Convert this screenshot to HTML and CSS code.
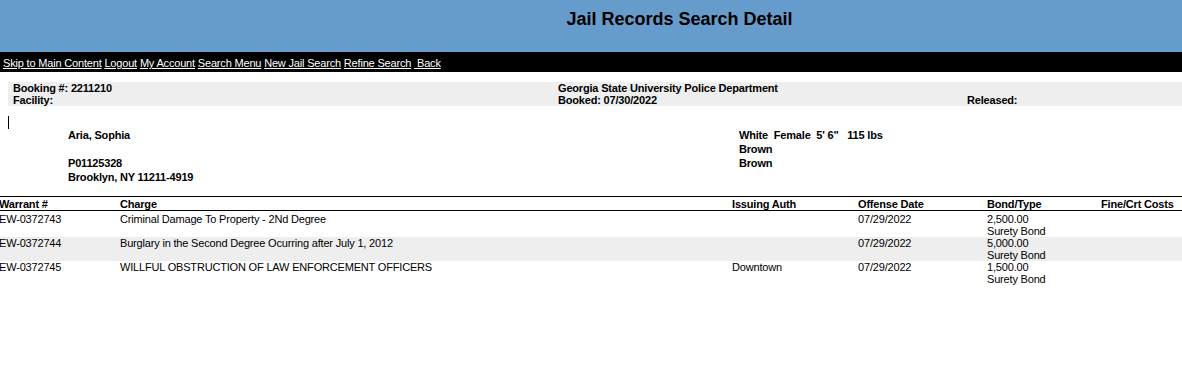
FILE: index.html
```html
<!DOCTYPE html>
<html lang="en">
<head>
    <meta charset="UTF-8">
    <title>Jail Records Search Detail</title>
    <link rel="stylesheet" href="styles.css">
</head>
<body>
    <div class="banner">
        <div class="banner-logo"></div>
        <h1>Jail Records Search Detail</h1>
    </div>
    <div class="nav">
        <a href="#main">Skip to Main Content</a>
        <a href="#">Logout</a>
        <a href="#">My Account</a>
        <a href="#">Search Menu</a>
        <a href="#">New Jail Search</a>
        <a href="#">Refine Search</a>
        <a href="#">&nbsp;Back</a>
    </div>

    <div class="booking" id="main">
        <div>Booking #: 2211210<br>Facility:</div>
        <div>Georgia State University Police Department<br>Booked: 07/30/2022</div>
        <div><br>Released:</div>
    </div>

    <div class="person">
        <div class="photo"></div>
        <div class="person-name">
            <div>Aria, Sophia</div>
            <div>&nbsp;</div>
            <div>P01125328</div>
            <div>Brooklyn, NY 11211-4919</div>
        </div>
        <div class="person-desc">
            <div class="pre">White  Female  5' 6"   115 lbs</div>
            <div>Brown</div>
            <div>Brown</div>
        </div>
    </div>

    <div class="charges">
        <div class="charge-row charge-head">
            <div>Warrant #</div>
            <div>Charge</div>
            <div>Issuing Auth</div>
            <div>Offense Date</div>
            <div>Bond/Type</div>
            <div>Fine/Crt Costs</div>
        </div>
        <div class="charge-row">
            <div>EW-0372743</div>
            <div>Criminal Damage To Property - 2Nd Degree</div>
            <div></div>
            <div>07/29/2022</div>
            <div>2,500.00<br>Surety Bond</div>
            <div></div>
        </div>
        <div class="charge-row alt">
            <div>EW-0372744</div>
            <div>Burglary in the Second Degree Ocurring after July 1, 2012</div>
            <div></div>
            <div>07/29/2022</div>
            <div>5,000.00<br>Surety Bond</div>
            <div></div>
        </div>
        <div class="charge-row">
            <div>EW-0372745</div>
            <div>WILLFUL OBSTRUCTION OF LAW ENFORCEMENT OFFICERS</div>
            <div>Downtown</div>
            <div>07/29/2022</div>
            <div>1,500.00<br>Surety Bond</div>
            <div></div>
        </div>
    </div>
</body>
</html>
```

FILE: styles.css
```css
body {
    margin: 0;
    font-family: "Liberation Sans", Arial, sans-serif;
    font-size: 11px;
    letter-spacing: -0.18px;
    color: #000;
    background: #fff;
    overflow: hidden;
}

/* top banner */
.banner {
    background-color: #669ccb;
    height: 52px;
    display: grid;
    grid-template-columns: 177px 1fr;
}
.banner h1 {
    margin: 0;
    padding-top: 9px;
    font-size: 18px;
    line-height: 20px;
    font-weight: bold;
    letter-spacing: 0;
    text-align: center;
}

/* nav links */
.nav {
    background-color: #000;
    height: 20px;
    line-height: 20px;
    padding-left: 3px;
    padding-top: 1px;
    box-sizing: border-box;
}
.nav a {
    color: #fff;
    text-decoration: underline;
}

/* booking summary */
.booking {
    margin: 10px 0 0 8px;
    padding-left: 5px;
    background-color: #eeeeee;
    display: grid;
    grid-template-columns: 545px 409px 1fr;
    font-weight: bold;
    line-height: 12px;
}

/* person block */
.person {
    margin-top: 10px;
    display: grid;
    grid-template-columns: 60px 671px 1fr;
    padding-left: 8px;
    font-weight: bold;
    line-height: 14px;
}
.photo {
    width: 1px;
    height: 13px;
    background: #000;
}
.person-name,
.person-desc {
    padding-top: 12px;
}
.pre {
    white-space: pre;
}

/* charges table */
.charges {
    margin-top: 12px;
    border-top: 1px solid #000;
}
.charge-row {
    display: grid;
    grid-template-columns: 121px 612px 126px 129px 114px 1fr;
    margin-left: -1px;
    line-height: 12px;
    min-height: 24px;
}
.charge-row.charge-head {
    font-weight: bold;
    min-height: 0;
    padding: 1px 0 0;
    border-bottom: 1px solid #000;
    margin-bottom: 2px;
}
.charge-row.alt {
    background-color: #eeeeee;
}
```
